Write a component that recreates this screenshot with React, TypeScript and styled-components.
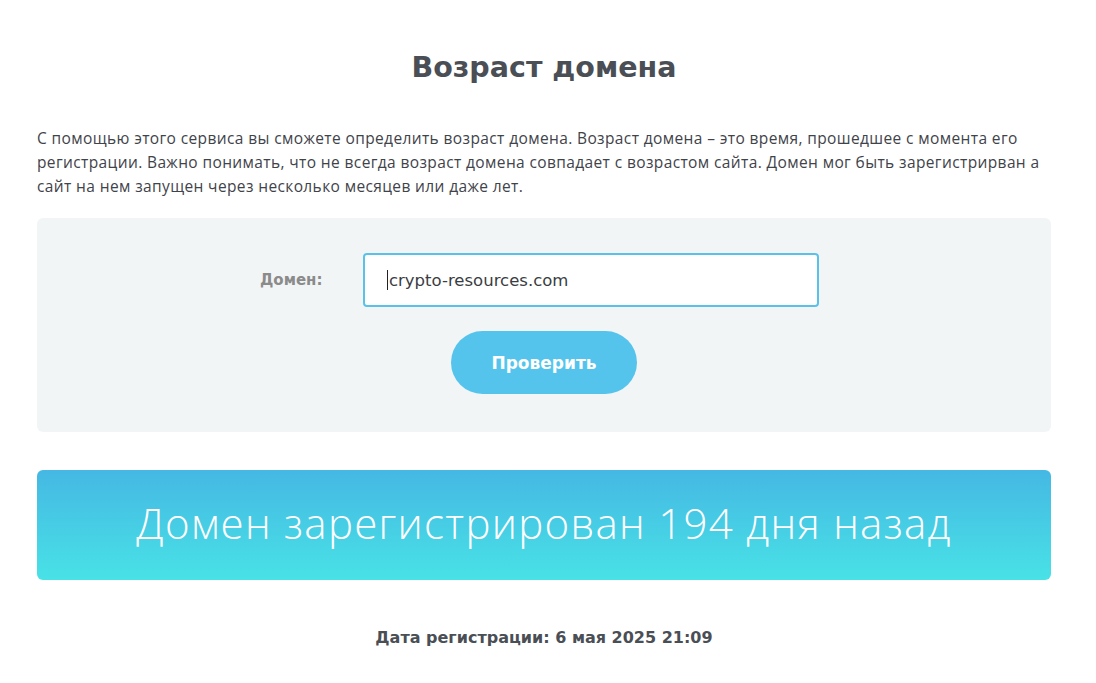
import React from "react";
import styled, { createGlobalStyle } from "styled-components";

const Global = createGlobalStyle`
  html, body { margin: 0; padding: 0; background: #ffffff; }
  body { font-family: "Open Sans", "Noto Sans", sans-serif; }
  * { box-sizing: border-box; }
`;

const Page = styled.main`
  width: 1014px;
  margin-left: 37px;
  padding-top: 48px;
  padding-bottom: 30px;
`;

const Title = styled.h1`
  margin: 0;
  text-align: center;
  font-family: "DejaVu Sans", sans-serif;
  font-weight: 700;
  font-size: 28.5px;
  line-height: 40px;
  color: #4a4e55;
`;

const Intro = styled.p`
  margin: 38px 0 0;
  font-family: "Open Sans", sans-serif;
  font-size: 15.5px;
  letter-spacing: 0.38px;
  line-height: 24px;
  color: #3f434a;
  white-space: nowrap;
`;

const FormBox = styled.section`
  margin-top: 20px;
  height: 214px;
  background: #f2f5f6;
  border-radius: 6px;
  padding-top: 35px;
  display: flex;
  flex-direction: column;
  align-items: stretch;
`;

const FieldRow = styled.div`
  display: flex;
  align-items: center;
  padding-left: 223px;
`;

const Label = styled.label`
  width: 103px;
  font-family: "DejaVu Sans", sans-serif;
  font-weight: 700;
  font-size: 15px;
  color: #8b8b8b;
`;

const Input = styled.div`
  width: 456px;
  height: 54px;
  border: 2px solid #5ac2e9;
  border-radius: 4px;
  background: #ffffff;
  display: flex;
  align-items: center;
  padding-left: 22px;
  font-family: "DejaVu Sans", sans-serif;
  font-size: 16.5px;
  color: #3a3d42;
`;

const Caret = styled.span`
  display: inline-block;
  width: 1px;
  height: 20px;
  background: #222;
  margin-right: 1px;
`;

const Button = styled.button`
  align-self: center;
  margin-top: 24px;
  width: 186px;
  height: 63px;
  border: none;
  border-radius: 32px;
  background: #55c4ec;
  color: #ffffff;
  font-family: "DejaVu Sans", sans-serif;
  font-weight: 700;
  font-size: 17px;
`;

const Result = styled.div`
  margin-top: 38px;
  height: 110px;
  padding-bottom: 5px;
  border-radius: 6px;
  background: linear-gradient(180deg, #45b8e3 0%, #48e2e6 100%);
  display: flex;
  align-items: center;
  justify-content: center;
  color: #ffffff;
  font-family: "Open Sans", sans-serif;
  font-weight: 300;
  font-size: 42px;
  letter-spacing: 1.3px;
`;

const DateLine = styled.p`
  margin: 48px 0 0;
  text-align: center;
  font-family: "DejaVu Sans", sans-serif;
  font-weight: 700;
  font-size: 16px;
  color: #4a4e55;
`;

export default function App() {
  return (
    <>
      <Global />
      <Page>
        <Title>Возраст домена</Title>
        <Intro>
          С помощью этого сервиса вы сможете определить возраст домена. Возраст домена – это время, прошедшее с момента его
          <br />
          регистрации. Важно понимать, что не всегда возраст домена совпадает с возрастом сайта. Домен мог быть зарегистрирван а
          <br />
          сайт на нем запущен через несколько месяцев или даже лет.
        </Intro>
        <FormBox>
          <FieldRow>
            <Label>Домен:</Label>
            <Input>
              <Caret />
              crypto-resources.com
            </Input>
          </FieldRow>
          <Button>Проверить</Button>
        </FormBox>
        <Result>Домен зарегистрирован 194 дня назад</Result>
        <DateLine>Дата регистрации: 6 мая 2025 21:09</DateLine>
      </Page>
    </>
  );
}
